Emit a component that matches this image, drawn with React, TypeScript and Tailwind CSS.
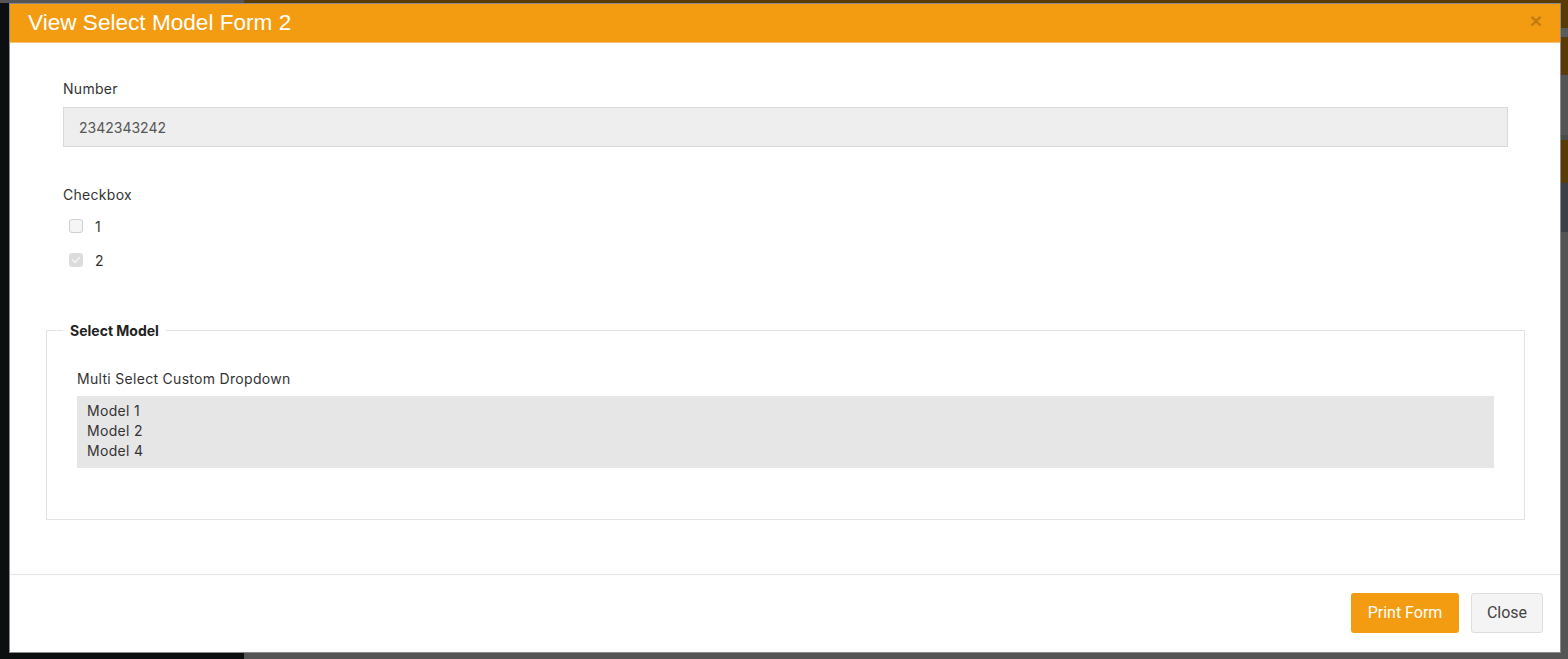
import React from "react";

export default function App() {
  return (
    <div className="relative w-[1568px] h-[659px] overflow-hidden" style={{ fontFamily: "Inter, Roboto, 'Liberation Sans', sans-serif" }}>
      {/* background page (dimmed) */}
      <div className="flex w-full h-full">
        <div className="w-[244px] flex flex-col">
          <div className="h-[3px] bg-[#555]" />
          <div className="flex-1 bg-[#0b0f10]" />
        </div>
        <div className="flex-1 flex flex-col">
          <div className="h-[28px] bg-[#5a3b06]" />
          <div className="h-[9px] bg-[#5a5a5a]" />
          <div className="h-[38px] bg-[#5a3b06]" />
          <div className="h-[60px] bg-[#555]" />
          <div className="h-[5px] bg-[#4c4c4c]" />
          <div className="h-[43px] bg-[#5a3b06]" />
          <div className="h-[49px] bg-[#3c4149]" />
          <div className="flex-1 bg-[#555]" />
        </div>
      </div>

      {/* modal */}
      <div className="absolute left-[9px] top-[3px] w-[1552px] h-[650px] bg-white border border-[#8a8a8a] flex flex-col">
        <div className="h-[39px] bg-[#f39c12] flex items-center justify-between pl-[18px] pr-[18px] border-b border-[#f6c27a]">
          <span className="text-white text-[22.6px] leading-none" style={{ fontFamily: "'Liberation Sans', Arial, sans-serif" }}>
            View Select Model Form 2
          </span>
          <span className="text-[21px] font-bold leading-none text-black opacity-20 -mt-[6px]" style={{ fontFamily: "'Liberation Sans', Arial, sans-serif" }}>×</span>
        </div>

        <div className="flex-1 pl-[36px] pr-[35px] pt-[36px] tracking-[0.3px]">
          <div className="pl-[17px] pr-[17px]">
            <div className="text-[14px] leading-[20px] text-[#333]">Number</div>
            <div className="mt-[8px] h-[40px] bg-[#eeeeee] border border-[#d9d9d9] flex items-center pl-[15px] text-[14px] text-[#555] tracking-normal">
              2342343242
            </div>
            <div className="mt-[38px] text-[14px] leading-[20px] text-[#333]">Checkbox</div>
            <div className="mt-[11px] flex flex-col gap-[14px]">
              <div className="flex items-center h-[20px] pl-[6px]">
                <span className="w-[14px] h-[14px] rounded-[3px] border border-[#d0d0d0] bg-[#f5f5f5]" />
                <span className="ml-[12px] text-[14px] text-[#333]">1</span>
              </div>
              <div className="flex items-center h-[20px] pl-[6px]">
                <span className="w-[14px] h-[14px] rounded-[3px] bg-[#dcdcdc] flex items-center justify-center">
                  <svg width="10" height="10" viewBox="0 0 10 10">
                    <path d="M1.5 5.2 L4 7.5 L8.5 2.5" stroke="#f4f4f4" strokeWidth="1.6" fill="none" strokeLinecap="round" strokeLinejoin="round" />
                  </svg>
                </span>
                <span className="ml-[12px] text-[14px] text-[#333]">2</span>
              </div>
            </div>
          </div>

          <fieldset className="mt-[50px] border border-[#e3e3e3] pl-[30px] pr-[30px] pt-[28px] pb-[51px]">
            <legend className="-ml-[14px] px-[7px] text-[14px] font-bold text-[#222] tracking-normal">Select Model</legend>
            <div className="text-[14px] leading-[20px] text-[#333]">Multi Select Custom Dropdown</div>
            <div className="mt-[7px] bg-[#e6e6e6] pl-[10px] pt-[5px] pb-[7px] text-[14px] leading-[20px] text-[#333]">
              <div>Model 1</div>
              <div>Model 2</div>
              <div>Model 4</div>
            </div>
          </fieldset>
        </div>

        <div className="h-[78px] border-t border-[#e5e5e5] flex items-start justify-end gap-[12px] pt-[18px] pr-[17px]" style={{ fontFamily: "Roboto, 'Liberation Sans', sans-serif" }}>
          <button className="h-[40px] w-[108px] rounded-[3px] bg-[#f39c12] text-white text-[16px]">Print Form</button>
          <button className="h-[40px] w-[72px] rounded-[3px] bg-[#f4f4f4] border border-[#ddd] text-[#444] text-[16px]">Close</button>
        </div>
      </div>
    </div>
  );
}
